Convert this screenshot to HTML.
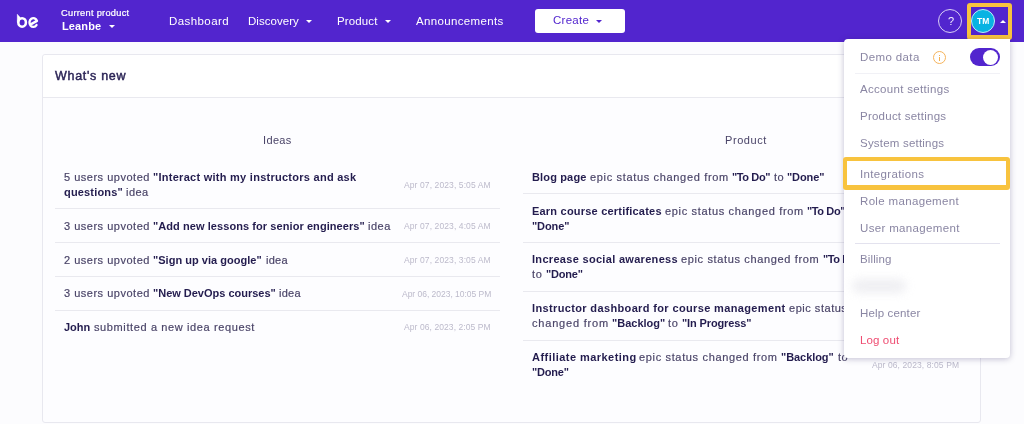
<!DOCTYPE html>
<html>
<head>
<meta charset="utf-8">
<style>
*{box-sizing:border-box;margin:0;padding:0}
html,body{width:1024px;height:424px;overflow:hidden;background:#fcfcfe;font-family:"Liberation Sans",sans-serif;color:#2b2456}
.t{position:absolute;white-space:nowrap;line-height:15px;z-index:1;will-change:transform}
.z{z-index:6}
#nav{position:absolute;left:0;top:0;width:1024px;height:42px;background:#5225ce;z-index:4}
.caret{position:absolute;width:0;height:0;border-left:3.2px solid transparent;border-right:3.2px solid transparent;border-top:3.2px solid #fff;z-index:6}
#card{position:absolute;left:42px;top:54px;width:939px;height:369px;background:#fdfdff;border:1px solid #e8e8ef;border-radius:3px}
#cardhead{position:absolute;left:43px;top:55px;width:937px;height:42px;background:#fff;border-radius:3px 3px 0 0}
.hr{position:absolute;height:1px;background:#e9e9ef}
#menu{position:absolute;left:844px;top:39px;width:166px;height:318.5px;background:#fff;border-radius:4px 0 4px 4px;box-shadow:0 1px 6px rgba(40,30,90,.28);z-index:5}
</style>
</head>
<body>
<div id="nav">
  <svg style="position:absolute;left:10px;top:6px" width="40" height="30" viewBox="0 0 40 30">
    <ellipse cx="12.1" cy="16.4" rx="3.8" ry="4.25" fill="none" stroke="#fff" stroke-width="2.55"/>
    <path d="M7.2 8.1 L7.2 16.4 L8.9 16.4 L10.3 11.5 Z" fill="#fff" stroke="#fff" stroke-width="0.3" stroke-linejoin="round"/>
    <path d="M26.5 19.1 A3.9 4.4 0 1 1 27.0 14.9 L20.7 18.4" fill="none" stroke="#fff" stroke-width="2.35" stroke-linecap="round" stroke-linejoin="round"/>
  </svg>
  <div id="create" style="position:absolute;left:535px;top:9px;width:90px;height:24px;background:#fff;border-radius:3px"></div>
  <div id="help" style="position:absolute;left:938px;top:9px;width:24.3px;height:24.3px;border:1px solid #d9d0f5;border-radius:50%"></div>
  <div id="hl1" style="position:absolute;left:967px;top:3px;width:45px;height:36.7px;border:4px solid #f8c33e;border-bottom-width:5px;border-radius:3px"></div>
  <div id="av" style="position:absolute;left:970.9px;top:8.8px;width:24.2px;height:24.2px;border-radius:50%;background:#08b3e3;border:1px solid #bfeaf8"></div>
</div>
<div class="caret" style="left:109px;top:25.2px"></div>
<div class="caret" style="left:306.3px;top:20.2px"></div>
<div class="caret" style="left:385.2px;top:20.2px"></div>
<div class="caret" style="left:595.8px;top:20.2px;border-top-color:#5225ce"></div>
<div class="caret" style="left:999.5px;top:20px;border-top:none;border-bottom:3.3px solid #fff"></div>
<div class="t z" style="left:947.5px;top:14.6px;font-size:11px;color:#f4f0ff;line-height:normal">?</div>
<div class="t z" style="left:977.3px;top:16.3px;font-size:8.5px;color:#fff;font-weight:bold;letter-spacing:0.1px;line-height:normal">TM</div>

<div id="card"></div>
<div id="cardhead"></div>
<div class="t" style="left:55px;top:68.5px;font-size:12.5px;font-weight:normal;-webkit-text-stroke:0.45px #2b2456;color:#2b2456;letter-spacing:0.7px;line-height:normal">What's new</div>
<div class="hr" style="left:43px;top:97px;width:937px"></div>

<div class="hr" style="left:55px;top:208px;width:445px"></div>
<div class="hr" style="left:55px;top:242px;width:445px"></div>
<div class="hr" style="left:55px;top:276px;width:445px"></div>
<div class="hr" style="left:55px;top:310px;width:445px"></div>
<div class="hr" style="left:523px;top:193px;width:446px"></div>
<div class="hr" style="left:523px;top:242px;width:446px"></div>
<div class="hr" style="left:523px;top:291px;width:446px"></div>
<div class="hr" style="left:523px;top:340px;width:446px"></div>

<div id="menu">
  <div style="position:absolute;left:89px;top:12px;width:13.2px;height:13.2px;border:1.35px solid #f6b45c;border-radius:50%"></div>
  <div style="position:absolute;left:95.1px;top:15.6px;width:1.1px;height:1.3px;background:#f5b050"></div>
  <div style="position:absolute;left:95.1px;top:17.8px;width:1.1px;height:4.2px;background:#f5b050"></div>
  <div style="position:absolute;left:126px;top:9.4px;width:30px;height:17.5px;border-radius:9px;background:#5225ce"></div>
  <div style="position:absolute;left:139.2px;top:10.6px;width:15.1px;height:15.1px;border-radius:50%;background:#fff"></div>
  <div class="hr" style="left:10.6px;top:34px;width:145.4px;background:#f1f1f6"></div>
  <div style="position:absolute;left:-1.5px;top:118px;width:167px;height:33px;border:4px solid #f8c33e;border-bottom-width:5px;border-radius:3px;background:#fff"></div>
  <div class="hr" style="left:10.6px;top:204px;width:145.4px;background:#e3e2ee"></div>
  <div style="position:absolute;left:8px;top:239.5px;width:54px;height:14px;background:#ececf0;filter:blur(5px);border-radius:7px;opacity:.85"></div>
</div>
<div class="t" style="left:64.00px;top:170px;font-size:11px;letter-spacing:0.507px;color:#4a4468;-webkit-text-stroke:0.18px #4a4468">5 users upvoted</div>
<div class="t" style="left:153.00px;top:170px;font-size:11px;letter-spacing:0.267px;color:#231c4e;font-weight:bold">"Interact with my instructors and ask</div>
<div class="t" style="left:64.00px;top:185px;font-size:11px;letter-spacing:0.172px;color:#231c4e;font-weight:bold">questions"</div>
<div class="t" style="left:126.25px;top:185px;font-size:11px;letter-spacing:0.440px;color:#4a4468;-webkit-text-stroke:0.18px #4a4468">idea</div>
<div class="t" style="left:64.00px;top:219px;font-size:11px;letter-spacing:0.507px;color:#4a4468;-webkit-text-stroke:0.18px #4a4468">3 users upvoted</div>
<div class="t" style="left:153.00px;top:219px;font-size:11px;letter-spacing:0.071px;color:#231c4e;font-weight:bold">"Add new lessons for senior engineers"</div>
<div class="t" style="left:368.00px;top:219px;font-size:11px;letter-spacing:0.524px;color:#4a4468;-webkit-text-stroke:0.18px #4a4468">idea</div>
<div class="t" style="left:64.00px;top:253px;font-size:11px;letter-spacing:0.507px;color:#4a4468;-webkit-text-stroke:0.18px #4a4468">2 users upvoted</div>
<div class="t" style="left:153.00px;top:253px;font-size:11px;letter-spacing:0.027px;color:#231c4e;font-weight:bold">"Sign up via google"</div>
<div class="t" style="left:265.50px;top:253px;font-size:11px;letter-spacing:0.274px;color:#4a4468;-webkit-text-stroke:0.18px #4a4468">idea</div>
<div class="t" style="left:64.00px;top:286px;font-size:11px;letter-spacing:0.507px;color:#4a4468;-webkit-text-stroke:0.18px #4a4468">3 users upvoted</div>
<div class="t" style="left:153.00px;top:286px;font-size:11px;letter-spacing:-0.011px;color:#231c4e;font-weight:bold">"New DevOps courses"</div>
<div class="t" style="left:279.25px;top:286px;font-size:11px;letter-spacing:0.274px;color:#4a4468;-webkit-text-stroke:0.18px #4a4468">idea</div>
<div class="t" style="left:64.25px;top:320px;font-size:11px;letter-spacing:-0.019px;color:#231c4e;font-weight:bold">John</div>
<div class="t" style="left:94.00px;top:320px;font-size:11px;letter-spacing:0.615px;color:#4a4468;-webkit-text-stroke:0.18px #4a4468">submitted a new idea request</div>
<div class="t" style="left:532.00px;top:170px;font-size:11px;letter-spacing:0.150px;color:#231c4e;font-weight:bold">Blog page</div>
<div class="t" style="left:590.00px;top:170px;font-size:11px;letter-spacing:0.664px;color:#4a4468;-webkit-text-stroke:0.18px #4a4468">epic status changed from</div>
<div class="t" style="left:731.75px;top:170px;font-size:11px;letter-spacing:-0.384px;color:#231c4e;font-weight:bold">"To Do"</div>
<div class="t" style="left:773.75px;top:170px;font-size:11px;letter-spacing:0.444px;color:#4a4468;-webkit-text-stroke:0.18px #4a4468">to</div>
<div class="t" style="left:787.00px;top:170px;font-size:11px;letter-spacing:-0.093px;color:#231c4e;font-weight:bold">"Done"</div>
<div class="t" style="left:532.00px;top:204px;font-size:11px;letter-spacing:0.208px;color:#231c4e;font-weight:bold">Earn course certificates</div>
<div class="t" style="left:665.00px;top:204px;font-size:11px;letter-spacing:0.664px;color:#4a4468;-webkit-text-stroke:0.18px #4a4468">epic status changed from</div>
<div class="t" style="left:807.00px;top:204px;font-size:11px;letter-spacing:-0.384px;color:#231c4e;font-weight:bold">"To Do"</div>
<div class="t" style="left:849.00px;top:204px;font-size:11px;letter-spacing:0.444px;color:#4a4468;-webkit-text-stroke:0.18px #4a4468">to</div>
<div class="t" style="left:532.00px;top:219px;font-size:11px;letter-spacing:-0.093px;color:#231c4e;font-weight:bold">"Done"</div>
<div class="t" style="left:532.00px;top:252px;font-size:11px;letter-spacing:0.309px;color:#231c4e;font-weight:bold">Increase social awareness</div>
<div class="t" style="left:681.25px;top:252px;font-size:11px;letter-spacing:0.642px;color:#4a4468;-webkit-text-stroke:0.18px #4a4468">epic status changed from</div>
<div class="t" style="left:822.50px;top:252px;font-size:11px;letter-spacing:-0.384px;color:#231c4e;font-weight:bold">"To Do"</div>
<div class="t" style="left:532.00px;top:267px;font-size:11px;letter-spacing:0.694px;color:#4a4468;-webkit-text-stroke:0.18px #4a4468">to</div>
<div class="t" style="left:545.75px;top:267px;font-size:11px;letter-spacing:-0.193px;color:#231c4e;font-weight:bold">"Done"</div>
<div class="t" style="left:532.00px;top:301px;font-size:11px;letter-spacing:0.361px;color:#231c4e;font-weight:bold">Instructor dashboard for course management</div>
<div class="t" style="left:789.25px;top:301px;font-size:11px;letter-spacing:0.527px;color:#4a4468;-webkit-text-stroke:0.18px #4a4468">epic status</div>
<div class="t" style="left:532.00px;top:316px;font-size:11px;letter-spacing:0.809px;color:#4a4468;-webkit-text-stroke:0.18px #4a4468">changed from</div>
<div class="t" style="left:612.00px;top:316px;font-size:11px;letter-spacing:-0.001px;color:#231c4e;font-weight:bold">"Backlog"</div>
<div class="t" style="left:668.25px;top:316px;font-size:11px;letter-spacing:0.694px;color:#4a4468;-webkit-text-stroke:0.18px #4a4468">to</div>
<div class="t" style="left:682.00px;top:316px;font-size:11px;letter-spacing:-0.124px;color:#231c4e;font-weight:bold">"In Progress"</div>
<div class="t" style="left:532.00px;top:350px;font-size:11px;letter-spacing:0.459px;color:#231c4e;font-weight:bold">Affiliate marketing</div>
<div class="t" style="left:639.25px;top:350px;font-size:11px;letter-spacing:0.653px;color:#4a4468;-webkit-text-stroke:0.18px #4a4468">epic status changed from</div>
<div class="t" style="left:780.75px;top:350px;font-size:11px;letter-spacing:-0.063px;color:#231c4e;font-weight:bold">"Backlog"</div>
<div class="t" style="left:837.50px;top:350px;font-size:11px;letter-spacing:0.444px;color:#4a4468;-webkit-text-stroke:0.18px #4a4468">to</div>
<div class="t" style="left:532.00px;top:365px;font-size:11px;letter-spacing:-0.193px;color:#231c4e;font-weight:bold">"Done"</div>
<div class="t" style="left:404.25px;top:180px;font-size:8.5px;letter-spacing:0.101px;color:#bcbacb;line-height:normal">Apr 07, 2023, 5:05 AM</div>
<div class="t" style="left:404.25px;top:221px;font-size:8.5px;letter-spacing:0.101px;color:#bcbacb;line-height:normal">Apr 07, 2023, 4:05 AM</div>
<div class="t" style="left:404.25px;top:255px;font-size:8.5px;letter-spacing:0.101px;color:#bcbacb;line-height:normal">Apr 07, 2023, 3:05 AM</div>
<div class="t" style="left:401.80px;top:289px;font-size:8.5px;letter-spacing:-0.024px;color:#bcbacb;line-height:normal">Apr 06, 2023, 10:05 PM</div>
<div class="t" style="left:404.40px;top:322px;font-size:8.5px;letter-spacing:0.081px;color:#bcbacb;line-height:normal">Apr 06, 2023, 2:05 PM</div>
<div class="t" style="left:872.10px;top:360px;font-size:8.5px;letter-spacing:0.096px;color:#bcbacb;line-height:normal">Apr 06, 2023, 8:05 PM</div>
<div class="t" style="left:262.90px;top:134px;font-size:11px;letter-spacing:0.360px;color:#4a4468;line-height:normal">Ideas</div>
<div class="t" style="left:725.00px;top:134px;font-size:11px;letter-spacing:0.566px;color:#4a4468;line-height:normal">Product</div>
<div class="t z" style="left:60.90px;top:8px;font-size:9.25px;letter-spacing:0.279px;color:#fff;line-height:normal;-webkit-text-stroke:0.22px #fff">Current product</div>
<div class="t z" style="left:62.00px;top:20px;font-size:11px;letter-spacing:0.121px;color:#fff;font-weight:bold;line-height:normal">Leanbe</div>
<div class="t z" style="left:168.75px;top:15px;font-size:11.5px;letter-spacing:0.423px;color:#fff;line-height:normal">Dashboard</div>
<div class="t z" style="left:247.50px;top:15px;font-size:11.5px;letter-spacing:0.034px;color:#fff;line-height:normal">Discovery</div>
<div class="t z" style="left:336.75px;top:15px;font-size:11.5px;letter-spacing:0.135px;color:#fff;line-height:normal">Product</div>
<div class="t z" style="left:415.50px;top:15px;font-size:11.5px;letter-spacing:0.345px;color:#fff;line-height:normal">Announcements</div>
<div class="t z" style="left:553.25px;top:14px;font-size:11.5px;letter-spacing:0.276px;color:#5225ce;line-height:normal">Create</div>
<div class="t z" style="left:860.40px;top:51px;font-size:11.5px;letter-spacing:0.380px;color:#8a86a3;line-height:normal">Demo data</div>
<div class="t z" style="left:860.40px;top:83px;font-size:11.5px;letter-spacing:0.318px;color:#8a86a3;line-height:normal">Account settings</div>
<div class="t z" style="left:860.40px;top:110px;font-size:11.5px;letter-spacing:0.239px;color:#8a86a3;line-height:normal">Product settings</div>
<div class="t z" style="left:860.40px;top:137px;font-size:11.5px;letter-spacing:0.206px;color:#8a86a3;line-height:normal">System settings</div>
<div class="t z" style="left:860.10px;top:168px;font-size:11.5px;letter-spacing:0.351px;color:#8a86a3;line-height:normal">Integrations</div>
<div class="t z" style="left:860.40px;top:195px;font-size:11.5px;letter-spacing:0.337px;color:#8a86a3;line-height:normal">Role management</div>
<div class="t z" style="left:860.40px;top:222px;font-size:11.5px;letter-spacing:0.343px;color:#8a86a3;line-height:normal">User management</div>
<div class="t z" style="left:860.40px;top:253px;font-size:11.5px;letter-spacing:0.119px;color:#8a86a3;line-height:normal">Billing</div>
<div class="t z" style="left:860.40px;top:307px;font-size:11.5px;letter-spacing:0.152px;color:#8a86a3;line-height:normal">Help center</div>
<div class="t z" style="left:860.40px;top:334px;font-size:11.5px;letter-spacing:0.121px;color:#ef4d72;line-height:normal">Log out</div>
</body>
</html>
